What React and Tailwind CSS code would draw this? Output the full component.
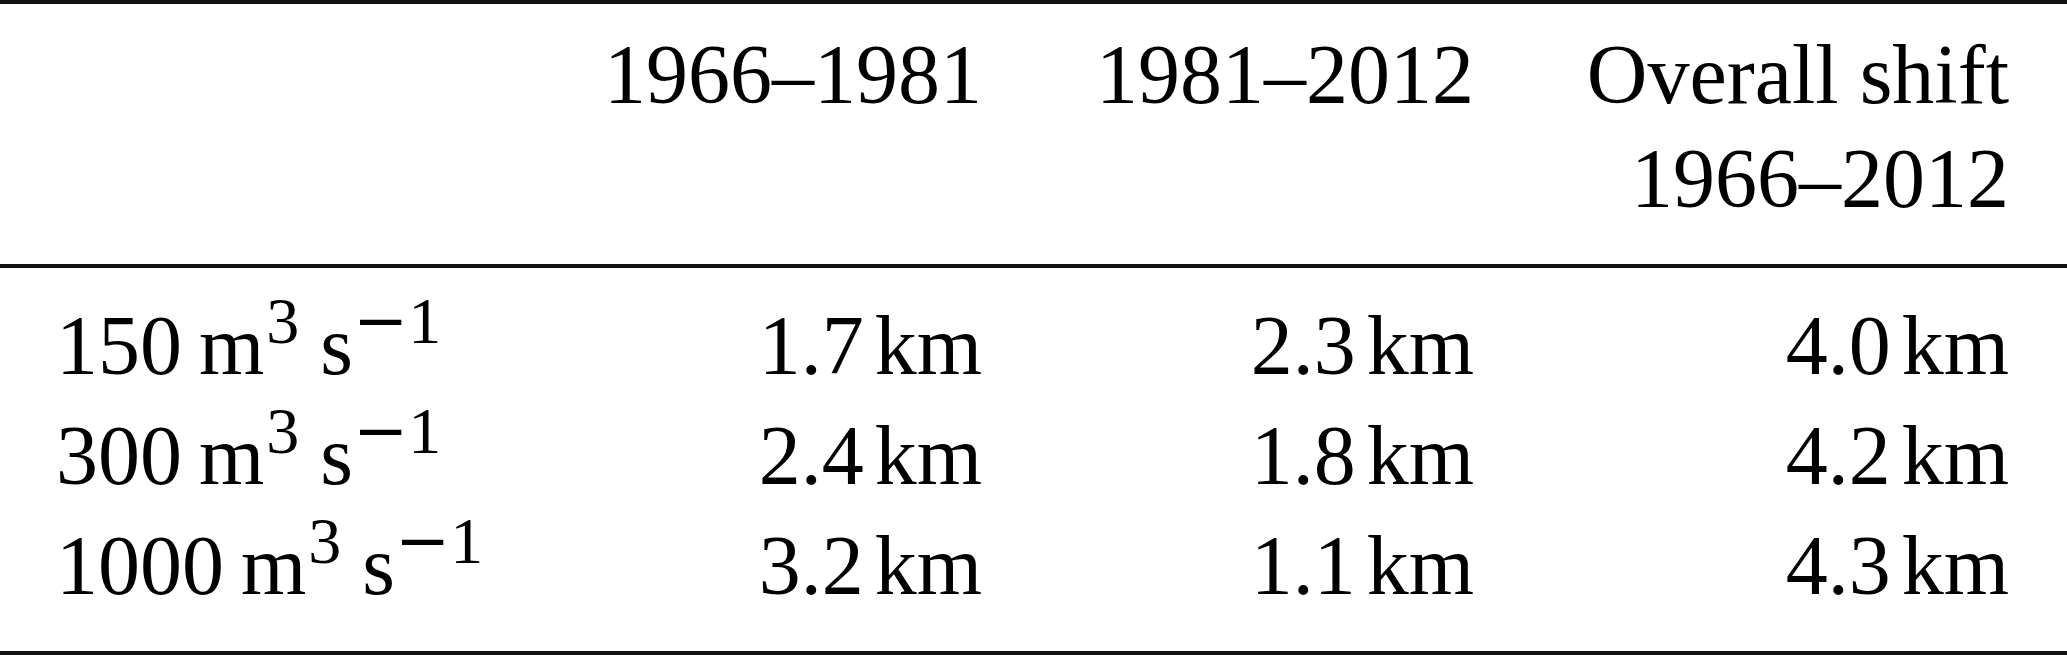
const rows = [
  { q: '150', a: '1.7', b: '2.3', c: '4.0' },
  { q: '300', a: '2.4', b: '1.8', c: '4.2' },
  { q: '1000', a: '3.2', b: '1.1', c: '4.3' },
];

function Km({ v }) {
  return (
    <span>
      <span>{v}</span>
      <span className="ml-[11px]">km</span>
    </span>
  );
}

function Discharge({ q }) {
  return (
    <span>
      <span>{q}</span>
      <span className="ml-[17px]">m</span>
      <sup className="text-[66px] -top-[31px] ml-[2px]">3</sup>
      <span className="ml-[21px]">s</span>
      <sup className="text-[66px] -top-[31px]">
        <span className="font-['DejaVu_Serif',serif]">−</span>
        <span>1</span>
      </sup>
    </span>
  );
}

export default function App() {
  return (
    <div className="w-[2067px] h-[655px] bg-white text-black font-['Liberation_Serif','Times_New_Roman',serif] text-[84px] overflow-hidden">
      {/* top rule */}
      <div className="h-[4px] bg-[#111]" />

      {/* header */}
      <div className="grid grid-cols-[426px_500px_492px_535px] pl-[56px] pt-[19px] pb-[33px] leading-[104px]">
        <div />
        <div className="text-right">1966–1981</div>
        <div className="text-right">1981–2012</div>
        <div className="text-right">
          <div>Overall shift</div>
          <div>1966–2012</div>
        </div>
      </div>

      {/* mid rule */}
      <div className="h-[4px] bg-[#111]" />

      {/* body */}
      <div className="pl-[56px] pt-[23px] pb-[30px]">
        {rows.map((r) => (
          <div key={r.q} className="grid grid-cols-[426px_500px_492px_535px] h-[110px] leading-[110px]">
            <div className="whitespace-nowrap"><Discharge q={r.q} /></div>
            <div className="text-right whitespace-nowrap"><Km v={r.a} /></div>
            <div className="text-right whitespace-nowrap"><Km v={r.b} /></div>
            <div className="text-right whitespace-nowrap"><Km v={r.c} /></div>
          </div>
        ))}
      </div>

      {/* bottom rule */}
      <div className="h-[4px] bg-[#111]" />
    </div>
  );
}
